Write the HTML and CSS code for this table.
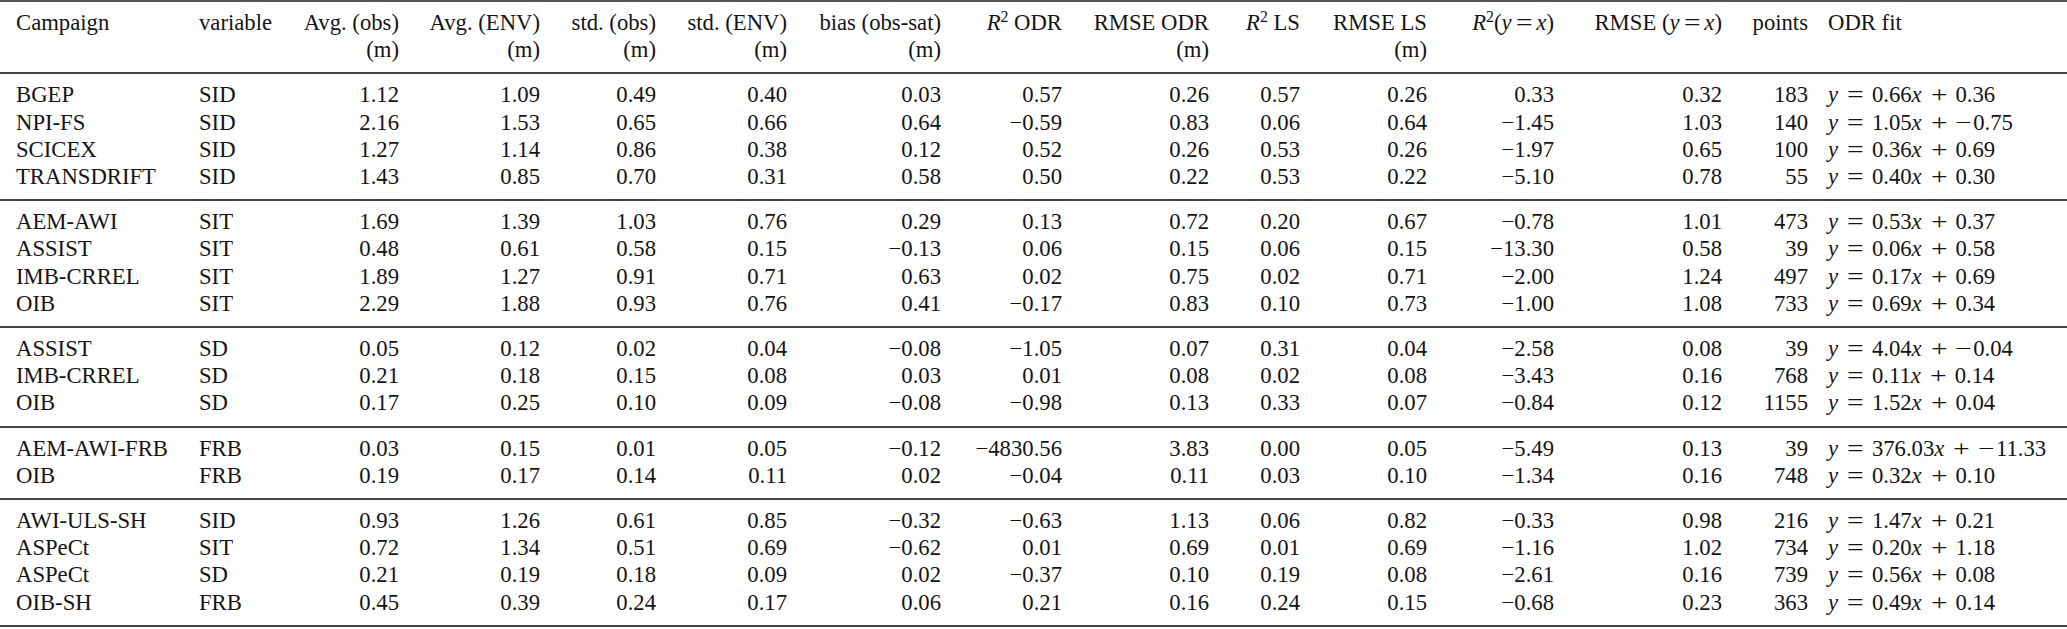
FILE: index.html
```html
<!DOCTYPE html>
<html lang="en">
<head>
<meta charset="utf-8">
<title>Campaign statistics</title>
<link rel="stylesheet" href="styles.css">
</head>
<body>
<div class="tbl">
  <div class="head row">
    <div class="c first">Campaign</div>
    <div class="c">variable</div>
    <div class="c num">Avg. (obs)<br>(m)</div>
    <div class="c num">Avg. (ENV)<br>(m)</div>
    <div class="c num">std. (obs)<br>(m)</div>
    <div class="c num">std. (ENV)<br>(m)</div>
    <div class="c num">bias (obs-sat)<br>(m)</div>
    <div class="c num"><i>R</i><sup>2</sup> ODR</div>
    <div class="c num">RMSE ODR<br>(m)</div>
    <div class="c num"><i>R</i><sup>2</sup> LS</div>
    <div class="c num">RMSE LS<br>(m)</div>
    <div class="c num"><i>R</i><sup>2</sup>(<i>y</i><span class="hop">=</span><i>x</i>)</div>
    <div class="c num">RMSE (<i>y</i><span class="hop">=</span><i>x</i>)</div>
    <div class="c num">points</div>
    <div class="c last">ODR fit</div>
  </div>

  <div class="group">
    <div class="row"><div class="c first">BGEP</div><div class="c">SID</div><div class="c num">1.12</div><div class="c num">1.09</div><div class="c num">0.49</div><div class="c num">0.40</div><div class="c num">0.03</div><div class="c num">0.57</div><div class="c num">0.26</div><div class="c num">0.57</div><div class="c num">0.26</div><div class="c num">0.33</div><div class="c num">0.32</div><div class="c num">183</div><div class="c last"><i class="v">y</i><span class="op">=</span>0.66<i class="v">x</i><span class="op">+</span>0.36</div></div>
    <div class="row"><div class="c first">NPI-FS</div><div class="c">SID</div><div class="c num">2.16</div><div class="c num">1.53</div><div class="c num">0.65</div><div class="c num">0.66</div><div class="c num">0.64</div><div class="c num">−0.59</div><div class="c num">0.83</div><div class="c num">0.06</div><div class="c num">0.64</div><div class="c num">−1.45</div><div class="c num">1.03</div><div class="c num">140</div><div class="c last"><i class="v">y</i><span class="op">=</span>1.05<i class="v">x</i><span class="op">+</span><span class="neg">−</span>0.75</div></div>
    <div class="row"><div class="c first">SCICEX</div><div class="c">SID</div><div class="c num">1.27</div><div class="c num">1.14</div><div class="c num">0.86</div><div class="c num">0.38</div><div class="c num">0.12</div><div class="c num">0.52</div><div class="c num">0.26</div><div class="c num">0.53</div><div class="c num">0.26</div><div class="c num">−1.97</div><div class="c num">0.65</div><div class="c num">100</div><div class="c last"><i class="v">y</i><span class="op">=</span>0.36<i class="v">x</i><span class="op">+</span>0.69</div></div>
    <div class="row"><div class="c first">TRANSDRIFT</div><div class="c">SID</div><div class="c num">1.43</div><div class="c num">0.85</div><div class="c num">0.70</div><div class="c num">0.31</div><div class="c num">0.58</div><div class="c num">0.50</div><div class="c num">0.22</div><div class="c num">0.53</div><div class="c num">0.22</div><div class="c num">−5.10</div><div class="c num">0.78</div><div class="c num">55</div><div class="c last"><i class="v">y</i><span class="op">=</span>0.40<i class="v">x</i><span class="op">+</span>0.30</div></div>
  </div>

  <div class="group">
    <div class="row"><div class="c first">AEM-AWI</div><div class="c">SIT</div><div class="c num">1.69</div><div class="c num">1.39</div><div class="c num">1.03</div><div class="c num">0.76</div><div class="c num">0.29</div><div class="c num">0.13</div><div class="c num">0.72</div><div class="c num">0.20</div><div class="c num">0.67</div><div class="c num">−0.78</div><div class="c num">1.01</div><div class="c num">473</div><div class="c last"><i class="v">y</i><span class="op">=</span>0.53<i class="v">x</i><span class="op">+</span>0.37</div></div>
    <div class="row"><div class="c first">ASSIST</div><div class="c">SIT</div><div class="c num">0.48</div><div class="c num">0.61</div><div class="c num">0.58</div><div class="c num">0.15</div><div class="c num">−0.13</div><div class="c num">0.06</div><div class="c num">0.15</div><div class="c num">0.06</div><div class="c num">0.15</div><div class="c num">−13.30</div><div class="c num">0.58</div><div class="c num">39</div><div class="c last"><i class="v">y</i><span class="op">=</span>0.06<i class="v">x</i><span class="op">+</span>0.58</div></div>
    <div class="row"><div class="c first">IMB-CRREL</div><div class="c">SIT</div><div class="c num">1.89</div><div class="c num">1.27</div><div class="c num">0.91</div><div class="c num">0.71</div><div class="c num">0.63</div><div class="c num">0.02</div><div class="c num">0.75</div><div class="c num">0.02</div><div class="c num">0.71</div><div class="c num">−2.00</div><div class="c num">1.24</div><div class="c num">497</div><div class="c last"><i class="v">y</i><span class="op">=</span>0.17<i class="v">x</i><span class="op">+</span>0.69</div></div>
    <div class="row"><div class="c first">OIB</div><div class="c">SIT</div><div class="c num">2.29</div><div class="c num">1.88</div><div class="c num">0.93</div><div class="c num">0.76</div><div class="c num">0.41</div><div class="c num">−0.17</div><div class="c num">0.83</div><div class="c num">0.10</div><div class="c num">0.73</div><div class="c num">−1.00</div><div class="c num">1.08</div><div class="c num">733</div><div class="c last"><i class="v">y</i><span class="op">=</span>0.69<i class="v">x</i><span class="op">+</span>0.34</div></div>
  </div>

  <div class="group">
    <div class="row"><div class="c first">ASSIST</div><div class="c">SD</div><div class="c num">0.05</div><div class="c num">0.12</div><div class="c num">0.02</div><div class="c num">0.04</div><div class="c num">−0.08</div><div class="c num">−1.05</div><div class="c num">0.07</div><div class="c num">0.31</div><div class="c num">0.04</div><div class="c num">−2.58</div><div class="c num">0.08</div><div class="c num">39</div><div class="c last"><i class="v">y</i><span class="op">=</span>4.04<i class="v">x</i><span class="op">+</span><span class="neg">−</span>0.04</div></div>
    <div class="row"><div class="c first">IMB-CRREL</div><div class="c">SD</div><div class="c num">0.21</div><div class="c num">0.18</div><div class="c num">0.15</div><div class="c num">0.08</div><div class="c num">0.03</div><div class="c num">0.01</div><div class="c num">0.08</div><div class="c num">0.02</div><div class="c num">0.08</div><div class="c num">−3.43</div><div class="c num">0.16</div><div class="c num">768</div><div class="c last"><i class="v">y</i><span class="op">=</span>0.11<i class="v">x</i><span class="op">+</span>0.14</div></div>
    <div class="row"><div class="c first">OIB</div><div class="c">SD</div><div class="c num">0.17</div><div class="c num">0.25</div><div class="c num">0.10</div><div class="c num">0.09</div><div class="c num">−0.08</div><div class="c num">−0.98</div><div class="c num">0.13</div><div class="c num">0.33</div><div class="c num">0.07</div><div class="c num">−0.84</div><div class="c num">0.12</div><div class="c num">1155</div><div class="c last"><i class="v">y</i><span class="op">=</span>1.52<i class="v">x</i><span class="op">+</span>0.04</div></div>
  </div>

  <div class="group">
    <div class="row"><div class="c first">AEM-AWI-FRB</div><div class="c">FRB</div><div class="c num">0.03</div><div class="c num">0.15</div><div class="c num">0.01</div><div class="c num">0.05</div><div class="c num">−0.12</div><div class="c num">−4830.56</div><div class="c num">3.83</div><div class="c num">0.00</div><div class="c num">0.05</div><div class="c num">−5.49</div><div class="c num">0.13</div><div class="c num">39</div><div class="c last"><i class="v">y</i><span class="op">=</span>376.03<i class="v">x</i><span class="op">+</span><span class="neg">−</span>11.33</div></div>
    <div class="row"><div class="c first">OIB</div><div class="c">FRB</div><div class="c num">0.19</div><div class="c num">0.17</div><div class="c num">0.14</div><div class="c num">0.11</div><div class="c num">0.02</div><div class="c num">−0.04</div><div class="c num">0.11</div><div class="c num">0.03</div><div class="c num">0.10</div><div class="c num">−1.34</div><div class="c num">0.16</div><div class="c num">748</div><div class="c last"><i class="v">y</i><span class="op">=</span>0.32<i class="v">x</i><span class="op">+</span>0.10</div></div>
  </div>

  <div class="group">
    <div class="row"><div class="c first">AWI-ULS-SH</div><div class="c">SID</div><div class="c num">0.93</div><div class="c num">1.26</div><div class="c num">0.61</div><div class="c num">0.85</div><div class="c num">−0.32</div><div class="c num">−0.63</div><div class="c num">1.13</div><div class="c num">0.06</div><div class="c num">0.82</div><div class="c num">−0.33</div><div class="c num">0.98</div><div class="c num">216</div><div class="c last"><i class="v">y</i><span class="op">=</span>1.47<i class="v">x</i><span class="op">+</span>0.21</div></div>
    <div class="row"><div class="c first">ASPeCt</div><div class="c">SIT</div><div class="c num">0.72</div><div class="c num">1.34</div><div class="c num">0.51</div><div class="c num">0.69</div><div class="c num">−0.62</div><div class="c num">0.01</div><div class="c num">0.69</div><div class="c num">0.01</div><div class="c num">0.69</div><div class="c num">−1.16</div><div class="c num">1.02</div><div class="c num">734</div><div class="c last"><i class="v">y</i><span class="op">=</span>0.20<i class="v">x</i><span class="op">+</span>1.18</div></div>
    <div class="row"><div class="c first">ASPeCt</div><div class="c">SD</div><div class="c num">0.21</div><div class="c num">0.19</div><div class="c num">0.18</div><div class="c num">0.09</div><div class="c num">0.02</div><div class="c num">−0.37</div><div class="c num">0.10</div><div class="c num">0.19</div><div class="c num">0.08</div><div class="c num">−2.61</div><div class="c num">0.16</div><div class="c num">739</div><div class="c last"><i class="v">y</i><span class="op">=</span>0.56<i class="v">x</i><span class="op">+</span>0.08</div></div>
    <div class="row"><div class="c first">OIB-SH</div><div class="c">FRB</div><div class="c num">0.45</div><div class="c num">0.39</div><div class="c num">0.24</div><div class="c num">0.17</div><div class="c num">0.06</div><div class="c num">0.21</div><div class="c num">0.16</div><div class="c num">0.24</div><div class="c num">0.15</div><div class="c num">−0.68</div><div class="c num">0.23</div><div class="c num">363</div><div class="c last"><i class="v">y</i><span class="op">=</span>0.49<i class="v">x</i><span class="op">+</span>0.14</div></div>
  </div>
</div>
</body>
</html>
```

FILE: styles.css
```css
html, body {
  margin: 0;
  padding: 0;
  background: #ffffff;
}

body {
  font-family: "Liberation Serif", "Times New Roman", serif;
  font-size: 22.7px;
  line-height: 27.2px;
  color: #141414;
}

.tbl {
  width: 2067px;
  border-top: 2px solid #555555;
}

.row {
  display: grid;
  grid-template-columns: 199px 86px 114px 141px 116px 131px 154px 121px 147px 91px 127px 127px 168px 86px 259px;
}

.head {
  padding: 7px 0 9px;
  border-bottom: 2px solid #444444;
}

.group {
  padding: 7px 0 9px;
  border-bottom: 2px solid #444444;
}

.c {
  white-space: nowrap;
  box-sizing: border-box;
}

.num {
  text-align: right;
}

.first {
  padding-left: 16px;
}

.last {
  padding-left: 20px;
}

i {
  font-style: italic;
}

.v {
  padding-right: 1px;
}

/* math operators: wider glyphs with relation/binary spacing */
.op {
  display: inline-block;
  margin: 0 10px;
  transform: scaleX(1.3);
}

.neg {
  display: inline-block;
  margin: 0 3px 0 2px;
  transform: scaleX(1.3);
}

.hop {
  display: inline-block;
  margin: 0 6px;
  transform: scaleX(1.3);
}

sup {
  font-size: 70%;
  line-height: 0;
  vertical-align: 0.5em;
}
```
